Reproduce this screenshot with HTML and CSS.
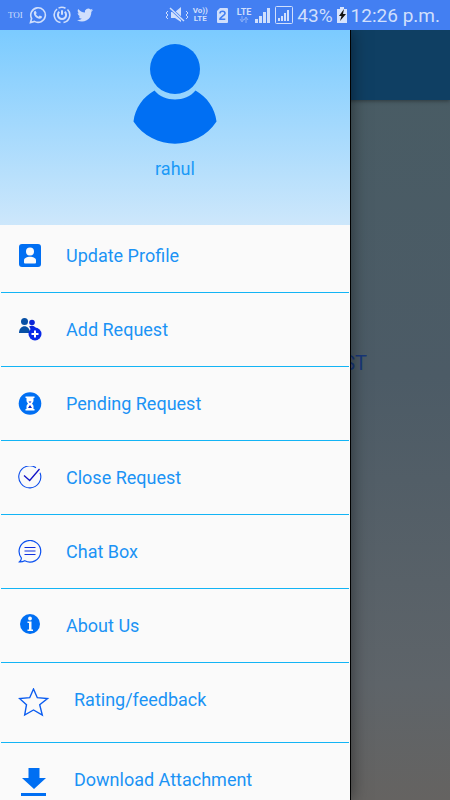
FILE: index.html
```html
<!DOCTYPE html>
<html lang="en">
	<head>
		<meta charset="utf-8">
		<meta name="viewport" content="width=device-width, initial-scale=1">
		<title>Requests</title>
		<link rel="stylesheet" href="styles.css">
	</head>
	<body>
	<div class="status">
		<div class="status-left">
			<span class="toi">TOI</span>
			<svg width="18" height="18" viewBox="0 0 18 18"><path d="M1.500 16.500l1.100-4A7.300 7.300 0 1 1 5.400 15.400z" fill="none" stroke="currentColor" stroke-width="1.600"/><path d="M6.500 4.800l1.200 2.200-.8 1.200c.7 1.200 1.500 1.900 2.800 2.500l1-1.100 2.300 1c0 1.600-1.300 2.400-2.700 2.200-3-.5-5.300-3-5.500-5.500 0-1.300.7-2.300 1.700-2.500z" fill="currentColor"/></svg>
			<svg width="18" height="18" viewBox="0 0 18 18" fill="none" stroke="currentColor"><path d="M4 3a7.700 7.700 0 0 0 3.500 13.500M10.500 16.500A7.700 7.700 0 0 0 14.500 3.500M12.500 2.200a7.700 7.700 0 0 0-7-.1" stroke-width="1.600"/><path d="M6.300 5.800a4.100 4.100 0 1 0 5.400 0M9 4.300v4.400" stroke-width="2"/></svg>
			<svg width="16" height="18" viewBox="0 0 24 24"><path d="M24 4.600c-.9.400-1.800.7-2.800.8 1-.6 1.800-1.600 2.200-2.700-1 .6-2 1-3.100 1.200a4.900 4.900 0 0 0-8.400 4.500C7.700 8.100 4.100 6.100 1.700 3.100.4 5.400 1.100 8.300 3.200 9.700c-.8 0-1.600-.2-2.200-.6 0 2.300 1.600 4.400 3.900 4.900-.7.200-1.500.2-2.200.1.600 2 2.400 3.400 4.600 3.400A9.900 9.900 0 0 1 0 19.500 14 14 0 0 0 21.500 7.100c1-.7 1.800-1.600 2.500-2.500z" fill="currentColor"/></svg>
		</div>
		<div class="status-right">
			<svg width="24" height="18" viewBox="0 0 24 18"><path d="M6 6h4l6-5v15l-6-4H6z" fill="currentColor"/><path d="M5 2l14 13" stroke="#437ff2" stroke-width="3"/><path d="M5 2l14 13" stroke="currentColor" stroke-width="1.500"/><path d="M3 5l-2 2 2 2-2 2 2 2M21 5l2 2-2 2 2 2-2 2" fill="none" stroke="currentColor"/></svg>
			<span class="net volte"><b>Vo))</b><b>LTE</b></span>
			<svg class="sim" width="13" height="17" viewBox="0 0 13 17"><path d="M4 1h7a1 1 0 0 1 1 1v13a1 1 0 0 1-1 1H2a1 1 0 0 1-1-1V4z" fill="currentColor"/><path d="M4 6.500C4 3.500 9 3.500 9 6.500 9 8.500 4 10 4 12.300h5.300" fill="none" stroke="#437ff2" stroke-width="1.600"/></svg>
			<span class="net"><b>LTE</b><svg width="10" height="7" viewBox="0 0 10 7" opacity=".5"><path d="M3 0v5M1 3l2 3 2-3M7 7V2M5 4l2-3 2 3" fill="none" stroke="currentColor"/></svg></span>
			<svg width="16" height="17" viewBox="0 0 16 17" fill="currentColor"><path d="M0 12h3v4H0zM4 9h3v7H4zM8 5h3v11H8zM12 1h3v15h-3z"/></svg>
			<svg width="18" height="18" viewBox="0 0 18 18"><rect x=".5" y=".5" width="17" height="17" rx="1" fill="none" stroke="currentColor"/><path d="M3 12h2v3H3zM6 10h2v5H6zM9 7h2v8H9zM12 4h2v11h-2z" fill="currentColor"/></svg>
			<span class="clock">43%</span>
			<svg width="10" height="16" viewBox="0 0 10 16"><path d="M3 0h4v2h3v14H0V2h3z" fill="#d7e4fd"/><path d="M7 2L2 9h2.500L3 14l6-7H6z" fill="#111"/></svg>
			<span class="clock">12:26 p.m.</span>
		</div>
	</div>

	<div class="screen">
		<div class="toolbar"></div>
		<p class="page-text">ST</p>

		<div class="drawer">
			<div class="profile">
				<svg width="84" height="102" viewBox="0 0 84 102" fill="#006ff3"><circle cx="42" cy="26" r="25"/><path d="M21.500 47.500C31 59.500 53 59.500 62.500 47.500 74 54 82 65 83.500 78.500 64 108 20 108 .5 78.500 2 65 10 54 21.500 47.500z"/></svg>
				<p class="name">rahul</p>
			</div>
			<nav class="menu">
				<a class="item" href="#profile">
					<svg width="24" height="24" viewBox="0 0 24 24"><rect x="1" y="0" width="22" height="23" rx="3" fill="#006ff3"/><circle cx="12" cy="7.500" r="4" fill="#fafafa"/><path d="M6 18.500v-2c0-5 12-5 12 0v2q0 1-1 1H7q-1 0-1-1z" fill="#fafafa"/></svg>
					<span>Update Profile</span>
				</a>
				<a class="item" href="#add">
					<svg width="24" height="24" viewBox="0 0 24 24"><circle cx="6.500" cy="3.500" r="3.500" fill="#0750a5"/><circle cx="14" cy="4.500" r="2.800" fill="#0a24d8"/><path d="M1 15c0-9 11-9 11 0z" fill="#0750a5"/><path d="M11 8.500c3-1.500 7-.5 7 3l-5 3.500c0-3-.5-5-2-6.500z" fill="#0a24d8"/><circle cx="17" cy="16" r="6.500" fill="#0728e8"/><path d="M17 12.500v7M13.500 16h7" stroke="#fff" stroke-width="2"/></svg>
					<span>Add Request</span>
				</a>
				<a class="item" href="#pending">
					<svg width="24" height="24" viewBox="0 0 24 24"><circle cx="12" cy="11.500" r="11.300" fill="#006ff3"/><path d="M7.500 4.500h9V6h-1v2.500c0 1.500-1 2.200-1.500 3 .5 1 1.500 1.500 1.500 3V17h1v1.500h-9V17h1v-2.500c0-1.500 1-2 1.500-3-.5-.8-1.500-1.500-1.500-3V6h-1z" fill="#fff"/><path d="M10.500 9.500h3L12 11zM12 13l2 3h-4z" fill="#0728c8"/></svg>
					<span>Pending Request</span>
				</a>
				<a class="item" href="#close">
					<svg width="24" height="24" viewBox="0 0 24 24" fill="none"><path d="M18 1.800a11 11 0 1 0 4 5" stroke="#0a4cec" stroke-width="1.100"/><path d="M6 9.500l5.700 5L21.500 3" stroke="#1212c8" stroke-width="1.300"/></svg>
					<span>Close Request</span>
				</a>
				<a class="item" href="#chat">
					<svg width="24" height="24" viewBox="0 0 24 24" fill="none"><path d="M3.300 17.800a10.800 10.800 0 1 1 3.500 3c-2 1-3.800 1.300-5.500 1.100 1.400-1.200 2.300-2.700 2-4.100z" stroke="#0a50f0" stroke-width="1.200"/><path d="M6.500 7.500h11M6.500 11h11M6.500 14.500h11" stroke="#1030e0" stroke-width="1.200"/></svg>
					<span>Chat Box</span>
				</a>
				<a class="item" href="#about">
					<svg width="24" height="24" viewBox="0 0 24 24"><circle cx="12" cy="10" r="10" fill="#006ff3"/><circle cx="12" cy="4.500" r="1.900" fill="#fafafa"/><path d="M9.500 7.500h4v8H15V17H9.500v-1.500H11V9H9.500z" fill="#fafafa"/></svg>
					<span>About Us</span>
				</a>
				<a class="item big" href="#rating">
					<svg width="32" height="32" viewBox="0 0 32 32"><path d="M15.500 1l3.800 8.700 10.200.8-7.800 6.200 2.600 10.300-8.800-5-8.800 5 1.800-10.300L1.500 10.500l10.200-.8z" fill="none" stroke="#0a5cf0" stroke-width="1.400"/></svg>
					<span>Rating/feedback</span>
				</a>
				<a class="item big" href="#download">
					<svg width="32" height="32" viewBox="0 0 32 32" fill="#006ff3"><path d="M10.500 0h11v10H28L16 21 4 10h6.500zM3 25h25v3H3z"/></svg>
					<span>Download Attachment</span>
				</a>
			</nav>
		</div>
	</div>
	</body>
</html>
```
FILE: styles.css
```css
body{
	margin: 0;
	height: 100vh;
	display: flex;
	flex-direction: column;
	overflow: hidden;
	font-family: Roboto, "Liberation Sans", sans-serif;
}
p{
	margin: 0;
}
svg{
	flex: none;
}

/* status bar */
.status{
	height: 30px;
	flex: none;
	box-sizing: border-box;
	padding: 0 10px 0 8px;
	display: flex;
	align-items: center;
	justify-content: space-between;
	background-color: #437ff2;
	color: #d0dffc;
	white-space: nowrap;
}
.status-left{
	display: flex;
	align-items: center;
	gap: 6px;
}
.toi{
	font-family: "Liberation Serif", serif;
	font-size: 9px;
}
.status-right{
	display: flex;
	align-items: center;
	gap: 4px;
}
.net{
	display: flex;
	flex-direction: column;
	align-items: center;
	font-size: 9px;
	line-height: 8px;
}
.volte{
	font-size: 8px;
}
.sim{
	margin: 0 4px;
}
.clock{
	font-size: 19px;
}

/* page behind the drawer */
.screen{
	flex: 1;
	position: relative;
	overflow: hidden;
	background: linear-gradient(#485c64, #4c5b66 45%, #5e6469 85%, #656361);
}
.toolbar{
	height: 70px;
	background-color: #0f3f63;
	box-shadow: 0 1px 4px rgba(0,0,0,0.4);
}
.page-text{
	padding: 251px 83px 0 0;
	text-align: right;
	font-size: 20px;
	line-height: 24px;
	color: #17377a;
}

/* drawer */
.drawer{
	position: absolute;
	top: 0;
	bottom: 0;
	left: 0;
	width: 78%;
	box-sizing: border-box;
	overflow: hidden;
	background-color: #fafafa;
	border-right: 1px solid #000;
	box-shadow: 0 0 16px rgba(0,0,0,0.5);
}
.profile{
	height: 195px;
	box-sizing: border-box;
	padding-top: 13px;
	display: flex;
	flex-direction: column;
	align-items: center;
	gap: 12px;
	background: linear-gradient(#7bcbff, #cde7fb);
}
.name{
	font-size: 18px;
	line-height: 24px;
	color: #1b9af7;
}
.menu{
	margin: 0 1px;
}
.item{
	display: flex;
	align-items: flex-start;
	gap: 24px;
	padding: 25px 17px 24px;
	border-bottom: 1px solid #12b4f5;
	font-size: 18px;
	line-height: 24px;
	color: #1b93f5;
	text-decoration: none;
}
.item:first-child{
	padding-top: 19px;
}
.big{
	padding-bottom: 22px;
}
```
